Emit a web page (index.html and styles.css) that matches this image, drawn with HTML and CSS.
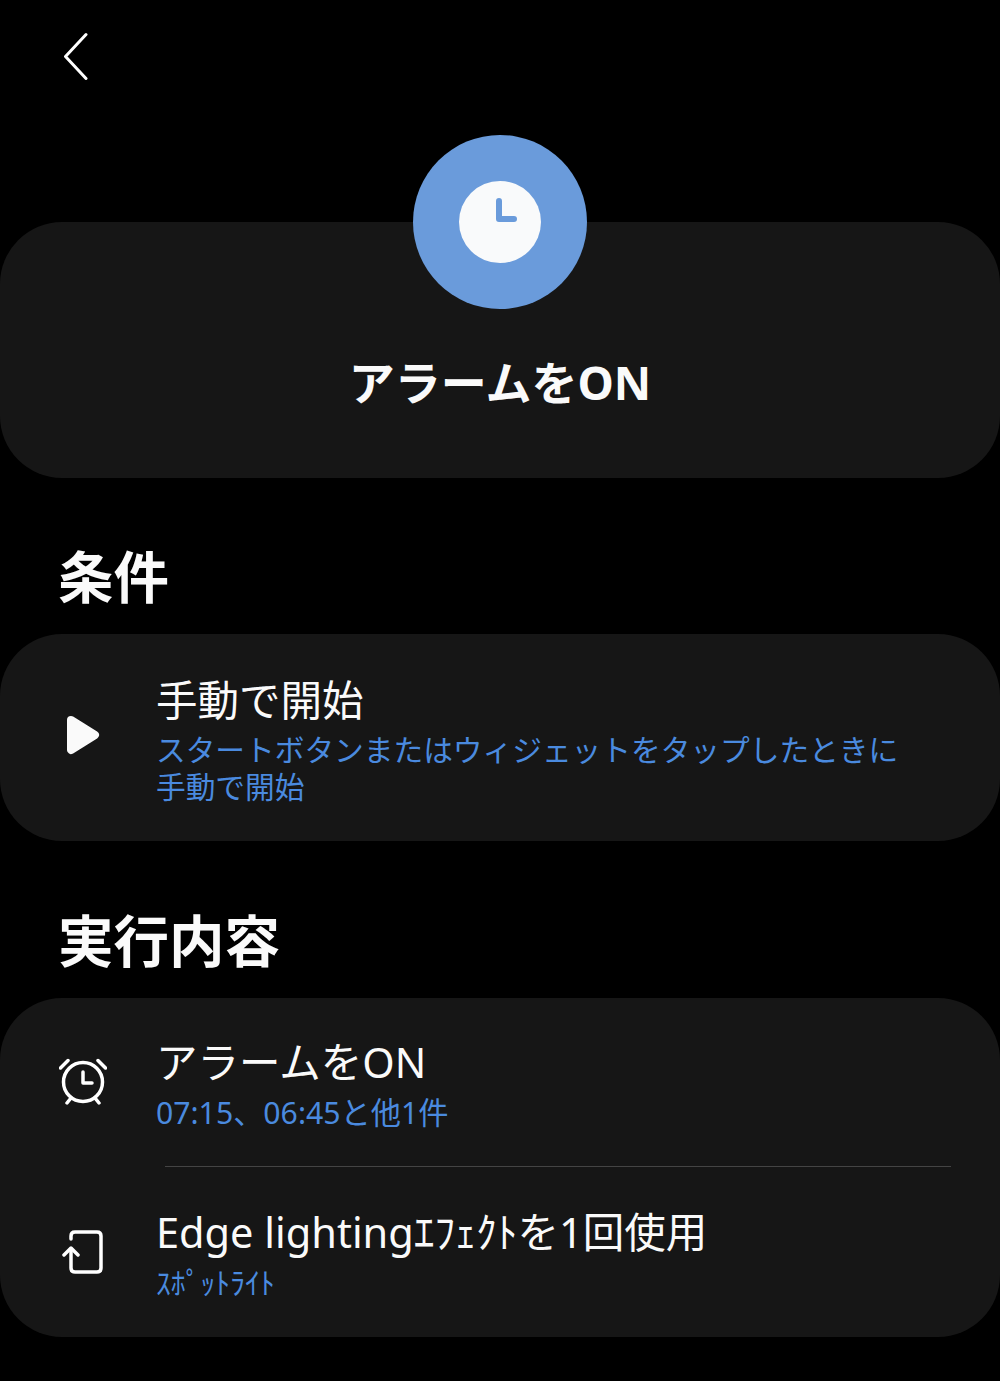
FILE: index.html
```html
<!DOCTYPE html>
<html lang="ja">
<head>
  <meta charset="UTF-8" />
  <meta name="viewport" content="width=device-width, initial-scale=1.0" />
  <title>アラームをON</title>
  <link rel="stylesheet" href="styles.css">
</head>
<body>
  <header class="topbar">
    <svg class="back" width="28" height="48" viewBox="0 0 28 48"><path d="M24 2.500 L3.500 24.500 L24 46.500" fill="none" stroke="#fff" stroke-width="3" stroke-linecap="round" stroke-linejoin="round"/></svg>
  </header>

  <section class="hero">
    <div class="badge">
      <svg width="82" height="82" viewBox="0 0 82 82">
        <circle cx="41" cy="41" r="41" fill="#f9fafb"/>
        <path d="M40 20 V38 H55" fill="none" stroke="#6a9bdb" stroke-width="6" stroke-linecap="round" stroke-linejoin="round"/>
      </svg>
    </div>
    <h1>アラームをON</h1>
  </section>

  <h2>条件</h2>
  <section class="card">
    <div class="row row-start">
      <div class="icon">
        <svg width="34" height="40" viewBox="0 0 34 40"><path d="M5 5 L29 20 L5 35 Z" fill="#fafafa" stroke="#fafafa" stroke-width="8" stroke-linejoin="round"/></svg>
      </div>
      <div class="text">
        <div class="title">手動で開始</div>
        <div class="sub">スタートボタンまたはウィジェットをタップしたときに手動で開始</div>
      </div>
    </div>
  </section>

  <h2 class="second">実行内容</h2>
  <section class="card">
    <div class="row row-alarm">
      <div class="icon">
        <svg width="48" height="48" viewBox="0 0 48 48" fill="none" stroke="#fff" stroke-width="3.500" stroke-linecap="round" stroke-linejoin="round">
          <circle cx="24" cy="25" r="19.500"/>
          <path d="M24 15 V26 H33"/>
          <path d="M1.500 11 L9 3.500"/>
          <path d="M46.500 11 L39 3.500"/>
          <path d="M8 46 L12 41"/>
          <path d="M40 46 L36 41"/>
        </svg>
      </div>
      <div class="text">
        <div class="title">アラームをON</div>
        <div class="sub">07:15、06:45と他1件</div>
      </div>
    </div>
    <div class="divider"></div>
    <div class="row row-edge">
      <div class="icon">
        <svg width="42" height="46" viewBox="0 0 42 46" fill="none" stroke="#fff" stroke-width="3.500" stroke-linecap="round" stroke-linejoin="round">
          <path d="M9 10 V7 Q9 3 13 3 H35 Q39 3 39 7 V39 Q39 43 35 43 H13 Q9 43 9 39 V20"/>
          <path d="M2 26 L9 19 L16 26"/>
        </svg>
      </div>
      <div class="text">
        <div class="title">Edge lightingｴﾌｪｸﾄを1回使用</div>
        <div class="sub">ｽﾎﾟｯﾄﾗｲﾄ</div>
      </div>
    </div>
  </section>
</body>
</html>
```
FILE: styles.css
```css
body {
  margin: 0;
  background: #000;
  color: #fafafa;
  font-family: "Noto Sans", "Noto Sans CJK JP", sans-serif;
  height: 1381px;
  overflow: hidden;
}

.topbar {
  height: 135px;
  padding-left: 62px;
  box-sizing: border-box;
  padding-top: 32px;
}

.back {
  display: block;
}

.hero {
  background: #161616;
  border-radius: 62px;
  height: 256px;
  margin-top: 87px;
  display: flex;
  flex-direction: column;
  align-items: center;
}

.badge {
  width: 174px;
  height: 174px;
  border-radius: 50%;
  background: #6a9bdb;
  margin-top: -87px;
  display: flex;
  align-items: center;
  justify-content: center;
  flex-shrink: 0;
}

.badge svg {
  display: block;
}

h1 {
  margin: 41px 0 0;
  font-size: 46px;
  line-height: 64px;
  font-weight: 700;
}

h2 {
  margin: 65px 0 0 58px;
  font-size: 55.500px;
  line-height: 67px;
  height: 91px;
  font-weight: 700;
}

h2.second {
  margin-top: 66px;
}

.card {
  background: #161616;
  border-radius: 62px;
  overflow: hidden;
}

.row {
  display: flex;
  box-sizing: border-box;
}

.row-start {
  height: 207px;
  padding-top: 37px;
}

.row-alarm {
  height: 168px;
  padding-top: 35px;
}

.row-edge {
  height: 170px;
  padding-top: 36px;
}

.icon {
  width: 157px;
  flex-shrink: 0;
  display: flex;
  align-items: center;
  justify-content: center;
  padding-left: 8px;
  box-sizing: border-box;
  height: 96px;
}

.row-start .icon {
  height: 128px;
}

.row-edge .icon {
  height: 97px;
}

.text {
  width: 752px;
  margin-left: -1px;
}

.title {
  font-size: 41.500px;
  line-height: 58px;
}

.sub {
  font-size: 29.700px;
  line-height: 37px;
  margin-top: 3px;
  color: #4a8adf;
}

.row-start .sub {
  margin-top: 2px;
}

.row-alarm .sub {
  font-size: 30.200px;
}

.divider {
  height: 1px;
  background: #444;
  margin: 0 49px 0 165px;
}
```
